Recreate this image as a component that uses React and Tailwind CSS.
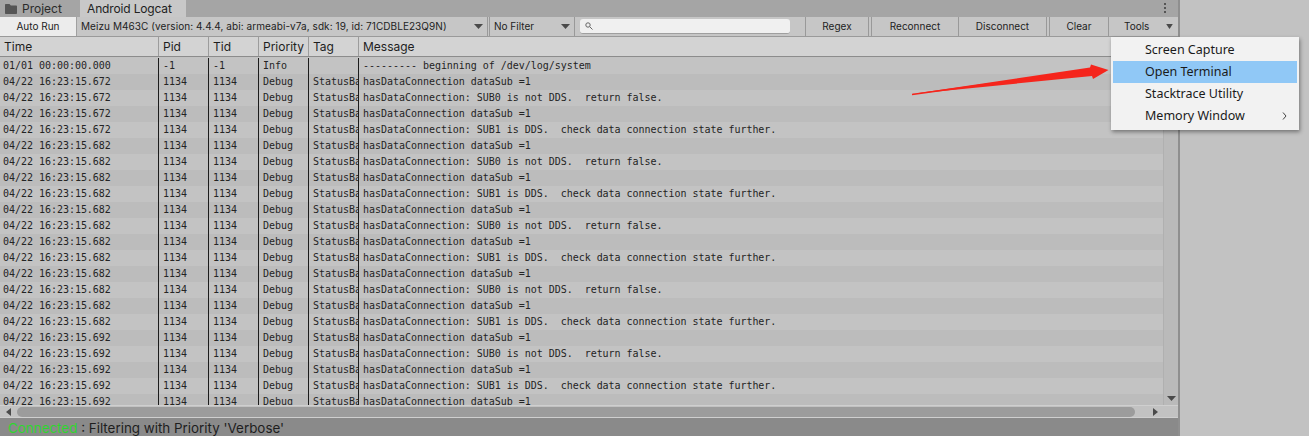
import React from "react";

const ui = "font-['Inter','Liberation_Sans',sans-serif]";
const A = "hasDataConnection dataSub =1";
const B = "hasDataConnection: SUB0 is not DDS.  return false.";
const C = "hasDataConnection: SUB1 is DDS.  check data connection state further.";
const pattern = [A, B, A, C];
const times = [".672", ".672", ".672", ".672", ".682", ".682", ".682", ".682", ".682", ".682", ".682", ".682", ".682", ".682", ".682", ".682", ".692", ".692", ".692", ".692", ".692"];
const rows = [
  { time: "01/01 00:00:00.000", pid: "-1", tid: "-1", pri: "Info", tag: "", msg: "--------- beginning of /dev/log/system" },
  ...times.map((t, i) => ({ time: "04/22 16:23:15" + t, pid: "1134", tid: "1134", pri: "Debug", tag: "StatusBa", msg: pattern[i % 4] })),
];

function Caret({ className = "" }) {
  return (
    <svg width="9" height="5" viewBox="0 0 9 5" className={className}>
      <path d="M0 0H9L4.5 5Z" fill="#4a4a4a" />
    </svg>
  );
}

function ToolButton({ w, children }) {
  return (
    <div className={`${w} h-full shrink-0 flex items-center justify-center border-r border-[#999999] text-[10px] text-[#222222] bg-[#c6c6c6]`}>
      {children}
    </div>
  );
}

function HeaderCell({ w, children }) {
  return (
    <div className={`${w} shrink-0 h-full flex items-center pl-[4px] border-r border-[#9c9c9c] text-[12px] text-[#1e1e1e]`}>
      {children}
    </div>
  );
}

function Cell({ w, children }) {
  return (
    <div className={`${w} pl-[4px] shrink-0 h-full overflow-hidden whitespace-pre border-l border-[#1c1c1c] leading-[16px]`}>
      {children}
    </div>
  );
}

export default function App() {
  return (
    <div className={`${ui} relative w-[1309px] h-[436px] overflow-hidden flex bg-[#c2c2c2]`}>
      <div className="w-[1180px] shrink-0 h-full flex flex-col border-r-2 border-[#8f8f8f]">
        {/* Tabs */}
        <div className="h-[17px] shrink-0 flex items-stretch bg-[#a5a5a5] relative">
          <div className="w-[80px] flex items-center pl-[5px] gap-[5px] text-[12px] text-[#2b2b2b]">
            <svg width="12" height="10" viewBox="0 0 12 10">
              <path d="M0 1C0 .4.4 0 1 0H4.5L5.8 1.5H11C11.6 1.500 12 1.900 12 2.500V9C12 9.600 11.600 10 11 10H1C.4 10 0 9.600 0 9Z" fill="#555555" />
            </svg>
            <span>Project</span>
          </div>
          <div className="w-[106px] flex items-center pl-[7px] bg-[#c8c8c8] text-[12px] tracking-[-0.15px] text-[#222222]">Android Logcat</div>
          <div className="absolute right-[12px] top-[3px] flex flex-col gap-[2px]">
            <span className="w-[2px] h-[2px] bg-[#555555]" />
            <span className="w-[2px] h-[2px] bg-[#555555]" />
            <span className="w-[2px] h-[2px] bg-[#555555]" />
          </div>
        </div>

        {/* Toolbar */}
        <div className="h-[20px] shrink-0 flex items-stretch bg-[#c6c6c6] border-b border-[#9a9a9a] text-[10px] text-[#222222]">
          <div className="w-[77px] shrink-0 flex items-center justify-center bg-[#ececec] border-r border-[#a0a0a0]">Auto Run</div>
          <div className="w-[411px] shrink-0 flex items-center justify-between px-[4px] border-r border-[#999999]">
            <span className="whitespace-nowrap tracking-[0.07px]">Meizu M463C (version: 4.4.4, abi: armeabi-v7a, sdk: 19, id: 71CDBLE23Q9N)</span>
            <Caret />
          </div>
          <div className="w-[86px] shrink-0 ml-[1px] flex items-center justify-between px-[4px] border-x border-[#999999]">
            <span>No Filter</span>
            <Caret />
          </div>
          <div className="w-[231px] shrink-0 flex items-center pl-[5px] border-r border-[#999999]">
            <div className="w-[210px] h-[15px] rounded-[3px] bg-[#f0f0f0] border-b border-[#9f9f9f] flex items-center pl-[5px]">
              <svg width="8" height="8" viewBox="0 0 8 8" fill="none" stroke="#666666" strokeWidth="1">
                <circle cx="3" cy="3" r="2.2" />
                <path d="M4.8 4.8L7.5 7.5" />
              </svg>
            </div>
          </div>
          <ToolButton w="w-[63px]">Regex</ToolButton>
          <div className="w-[3px] shrink-0 border-r border-[#999999]" />
          <ToolButton w="w-[87px]">Reconnect</ToolButton>
          <ToolButton w="w-[88px]">Disconnect</ToolButton>
          <div className="w-[3px] shrink-0 border-r border-[#999999]" />
          <ToolButton w="w-[59px]">Clear</ToolButton>
          <div className="flex-1 relative flex items-center pl-[15px]">
            <span>Tools</span>
            <Caret className="absolute right-[4px] top-[7px] scale-x-75" />
          </div>
        </div>

        {/* Table header */}
        <div className="h-[20px] shrink-0 flex items-stretch bg-[#d3d3d3] border-b border-[#8c8c8c]">
          <HeaderCell w="w-[159px]">Time</HeaderCell>
          <HeaderCell w="w-[50px]">Pid</HeaderCell>
          <HeaderCell w="w-[50px]">Tid</HeaderCell>
          <HeaderCell w="w-[50px]">Priority</HeaderCell>
          <HeaderCell w="w-[50px]">Tag</HeaderCell>
          <div className="flex-1 flex items-center pl-[4px] text-[12px] text-[#1e1e1e]">Message</div>
        </div>

        {/* List with vertical scrollbar */}
        <div className="h-[348px] shrink-0 flex items-stretch overflow-hidden">
          <div className="w-[1163px] shrink-0 overflow-hidden font-['DejaVu_Sans_Mono','Liberation_Mono',monospace] text-[10px] tracking-[-0.03px] text-[#242424]">
            {rows.map((r, i) => (
              <div key={i} className={`h-[16px] flex ${i === 0 ? "mt-[1px]" : ""} ${i % 2 === 0 ? "bg-[#c3c3c3]" : "bg-[#bcbcbc]"}`}>
                <div className="w-[158px] shrink-0 pl-[3px] leading-[16px] whitespace-pre">{r.time}</div>
                <Cell w="w-[50px]">{r.pid}</Cell>
                <Cell w="w-[50px]">{r.tid}</Cell>
                <Cell w="w-[50px]">{r.pri}</Cell>
                <Cell w="w-[50px]">{r.tag}</Cell>
                <Cell w="flex-1">{r.msg}</Cell>
              </div>
            ))}
          </div>
          <div className="flex-1 bg-[#bababa] border-l border-[#b0b0b0] flex flex-col justify-end items-center pb-[4px]">
            <Caret />
          </div>
        </div>

        {/* Horizontal scrollbar */}
        <div className="h-[13px] shrink-0 flex items-center bg-[#c2c2c2] border-y border-[#cfcfcf]">
          <svg width="5" height="8" viewBox="0 0 5 8" className="ml-[6px] shrink-0">
            <path d="M5 0V8L0 4Z" fill="#4a4a4a" />
          </svg>
          <div className="ml-[6px] w-[1118px] h-[10px] rounded-[5px] bg-[#9c9c9c] shrink-0" />
          <svg width="5" height="8" viewBox="0 0 5 8" className="ml-[18px] shrink-0">
            <path d="M0 0V8L5 4Z" fill="#4a4a4a" />
          </svg>
        </div>

        {/* Status bar */}
        <div className="flex-1 flex items-center pl-[8px] bg-[#8a8a8a] text-[13.4px] text-[#1e1e1e] whitespace-pre">
          <span className="text-[#2fd62f]">Connected</span>
          <span> : Filtering with Priority 'Verbose'</span>
        </div>
      </div>

      {/* Dropdown menu */}
      <div className="absolute left-[1111px] top-[37px] w-[188px] h-[93px] bg-[#f2f2f2] shadow-[1px_2px_4px_rgba(0,0,0,0.4)] pt-[2px] px-[2px] font-['Noto_Sans','Open_Sans',sans-serif] text-[12.5px] text-[#1a1a1a]">
        <div className="h-[22px] flex items-center pl-[32px]">Screen Capture</div>
        <div className="h-[22px] flex items-center pl-[32px] bg-[#90c8f6]">Open Terminal</div>
        <div className="h-[22px] flex items-center pl-[32px]">Stacktrace Utility</div>
        <div className="h-[22px] flex items-center pl-[32px] justify-between pr-[10px]">
          <span>Memory Window</span>
          <svg width="5" height="8" viewBox="0 0 5 8" fill="none" stroke="#444444" strokeWidth="1">
            <path d="M1 .5L4 4L1 7.500" />
          </svg>
        </div>
      </div>

      {/* Red annotation arrow */}
      <svg className="absolute left-[905px] top-[58px]" width="210" height="42" viewBox="905 58 210 42">
        <path d="M912 94L1090 67.500L1091 64.500L1108.500 70L1093 79L1092 76Z" fill="#f5251c" />
        <path d="M912 94.500L1092 70" stroke="#f5251c" strokeWidth="1.500" fill="none" />
      </svg>
    </div>
  );
}
